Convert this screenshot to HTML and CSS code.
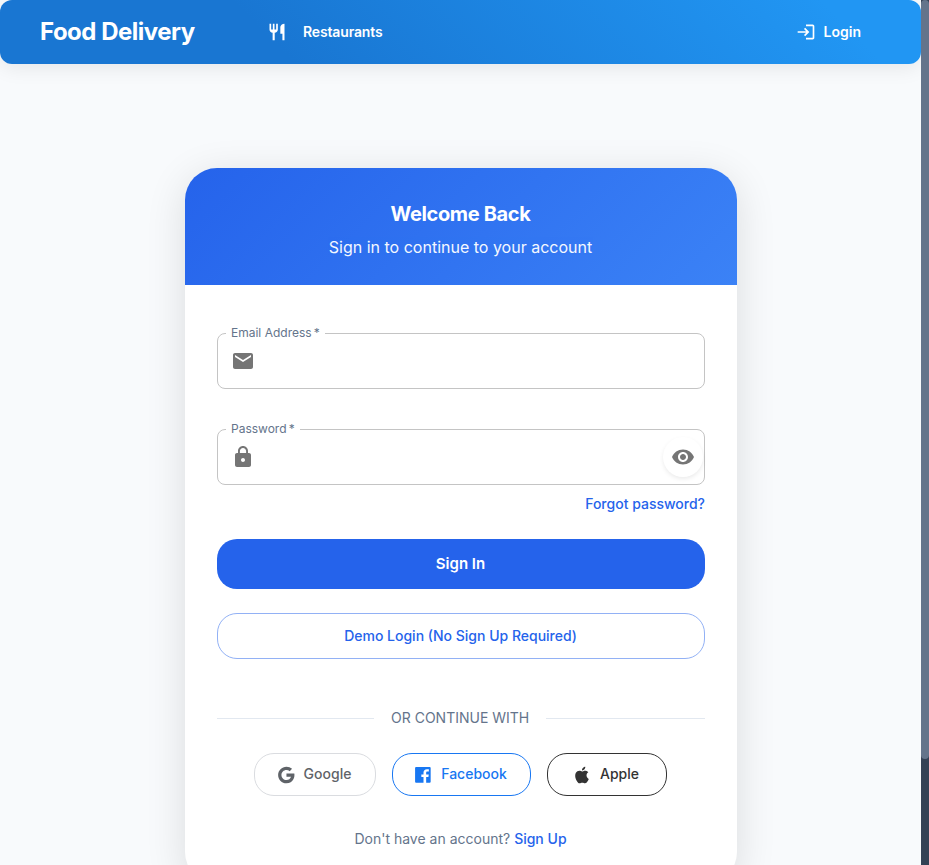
FILE: index.html
```html
<!DOCTYPE html>
<html lang="en">
<head>
<meta charset="utf-8">
<title>Food Delivery</title>
<link rel="stylesheet" href="styles.css">
</head>
<body>
<div class="page">
  <header class="navbar">
    <a class="brand">Food Delivery</a>
    <a class="nav-link">
      <svg class="icon-sm" viewBox="0 0 24 24"><path d="M11 9H9V2H7v7H5V2H3v7c0 2.120 1.660 3.840 3.750 3.970V22h2.500v-9.030C11.340 12.840 13 11.120 13 9V2h-2v7zm5-3v8h2.500v8H21V2c-2.760 0-5 2.240-5 4z"/></svg>
      <span>Restaurants</span>
    </a>
    <a class="login">
      <svg class="icon-sm" viewBox="0 0 24 24"><path d="M11 7 9.600 8.400l2.600 2.600H2v2h10.200l-2.600 2.600L11 17l5-5-5-5zm9 12h-8v2h8c1.100 0 2-.9 2-2V5c0-1.100-.9-2-2-2h-8v2h8v14z"/></svg>
      <span>Login</span>
    </a>
  </header>
  <main class="card">
    <div class="card-head">
      <h1>Welcome Back</h1>
      <p>Sign in to continue to your account</p>
    </div>
    <form class="card-body">
      <fieldset class="field">
        <legend>Email Address&#8201;*</legend>
        <svg class="icon" viewBox="0 0 24 24"><path d="M20 4H4c-1.100 0-1.990.9-1.990 2L2 18c0 1.100.9 2 2 2h16c1.100 0 2-.9 2-2V6c0-1.100-.9-2-2-2zm0 4-8 5-8-5V6l8 5 8-5v2z"/></svg>
      </fieldset>
      <fieldset class="field">
        <legend>Password&#8201;*</legend>
        <svg class="icon" viewBox="0 0 24 24"><path d="M18 8h-1V6c0-2.760-2.240-5-5-5S7 3.240 7 6v2H6c-1.100 0-2 .9-2 2v10c0 1.100.9 2 2 2h12c1.100 0 2-.9 2-2V10c0-1.100-.9-2-2-2zm-6 9c-1.100 0-2-.9-2-2s.9-2 2-2 2 .9 2 2-.9 2-2 2zm3.100-9H8.900V6c0-1.710 1.390-3.100 3.100-3.100 1.710 0 3.100 1.390 3.100 3.100v2z"/></svg>
        <span class="eye"><svg class="icon" viewBox="0 0 24 24"><path d="M12 4.500C7 4.500 2.730 7.610 1 12c1.730 4.390 6 7.500 11 7.500s9.270-3.110 11-7.500c-1.730-4.390-6-7.500-11-7.500zM12 17c-2.760 0-5-2.240-5-5s2.240-5 5-5 5 2.240 5 5-2.240 5-5 5zm0-8c-1.660 0-3 1.340-3 3s1.340 3 3 3 3-1.340 3-3-1.340-3-3-3z"/></svg></span>
      </fieldset>
      <a class="forgot">Forgot password?</a>
      <button type="button" class="btn primary">Sign In</button>
      <button type="button" class="btn demo">Demo Login (No Sign Up Required)</button>
      <div class="divider">OR CONTINUE WITH</div>
      <div class="social">
        <button type="button" class="btn google"><svg class="icon-sm" viewBox="0 0 24 24"><path d="M12.545 10.239v3.821h5.445c-.712 2.315-2.647 3.972-5.445 3.972-3.332 0-6.033-2.701-6.033-6.032s2.701-6.032 6.033-6.032c1.498 0 2.866.549 3.921 1.453l2.814-2.814C17.503 2.988 15.139 2 12.545 2 7.021 2 2.543 6.477 2.543 12s4.478 10 10.002 10c8.396 0 10.249-7.850 9.426-11.748z"/></svg><span>Google</span></button>
        <button type="button" class="btn facebook"><svg class="icon-sm" viewBox="0 0 24 24"><path d="M4 2.500h16a1.200 1.200 0 0 1 1.200 1.200v16.400a1.200 1.200 0 0 1-1.200 1.200h-4.200v-7h2.700l.4-3h-3.100V9.400c0-1 .4-1.500 1.600-1.500h1.600V5.200c-.5-.1-1.300-.2-2.300-.2-2.500 0-4.100 1.500-4.100 4v2.300H10v3h2.600v7H3.700a1.200 1.200 0 0 1-1.200-1.200V3.700A1.200 1.200 0 0 1 3.700 2.500z"/></svg><span>Facebook</span></button>
        <button type="button" class="btn apple"><svg class="icon-sm" viewBox="0 0 24 24"><path d="M18.710 19.500c-.83 1.240-1.710 2.450-3.050 2.470-1.340.03-1.770-.79-3.290-.79-1.530 0-2 .77-3.270.82-1.310.05-2.300-1.320-3.140-2.530C4.250 17 2.940 12.450 4.700 9.390c.87-1.520 2.430-2.480 4.120-2.510 1.280-.02 2.500.87 3.290.87.78 0 2.260-1.070 3.810-.91.65.03 2.470.26 3.640 1.980-.09.06-2.170 1.280-2.150 3.810.03 3.020 2.650 4.030 2.680 4.040-.03.07-.42 1.440-1.380 2.830M13 3.500c.73-.83 1.940-1.460 2.940-1.500.13 1.170-.34 2.350-1.040 3.190-.69.85-1.830 1.510-2.950 1.420-.15-1.150.41-2.350 1.050-3.110z"/></svg><span>Apple</span></button>
      </div>
      <p class="signup">Don't have an account? <a>Sign Up</a></p>
    </form>
  </main>
</div>
<div class="scrollbar"><div class="thumb"></div></div>
</body>
</html>
```
FILE: styles.css
```css
* { box-sizing: border-box; }
body {
  margin: 0;
  display: flex;
  height: 865px;
  overflow: hidden;
  font-family: Inter, sans-serif;
  background: #f8fafc;
}
svg { fill: currentColor; flex: none; }
.icon { width: 24px; height: 24px; display: block; }
.icon-sm { width: 20px; height: 20px; }
.page { width: 921px; height: 865px; overflow: hidden; }
.scrollbar { width: 8px; background: #334155; }
.thumb { height: 759px; background: #64748b; border-radius: 4px; }

.navbar {
  height: 64px;
  display: flex;
  align-items: center;
  padding: 0 60px 0 40px;
  color: #fff;
  border-radius: 12px;
  background: linear-gradient(45deg, #1976d2 30%, #2196f3 90%);
  box-shadow: 0 4px 20px rgba(0, 0, 0, .08);
}
.brand { width: 227px; padding-bottom: 2px; font-size: 24px; font-weight: 700; letter-spacing: -.5px; }
.nav-link { display: flex; align-items: center; gap: 16px; font-size: 14px; font-weight: 600; letter-spacing: -.15px; }
.login { margin-left: auto; display: flex; align-items: center; gap: 8px; font-size: 14px; font-weight: 600; }
.nav-link span, .login span { padding-bottom: 2px; }

.card {
  width: 552px;
  height: 716px;
  margin: 104px auto 0 185px;
  border-radius: 32px;
  background: #fff;
  overflow: hidden;
  box-shadow: 0 8px 40px rgba(0, 0, 0, .12);
}
.card-head {
  height: 117px;
  padding: 32px 1px 0 0;
  text-align: center;
  color: #fff;
  background: linear-gradient(135deg, #2563eb 0%, #3b82f6 100%);
}
h1 { margin: 0; font-size: 20px; line-height: 28px; font-weight: 700; letter-spacing: -.36px; }
.card-head p { margin: 7px 0 0; font-size: 16px; line-height: 24px; opacity: .95; }
.card-body { display: flex; flex-direction: column; padding: 42px 32px 0; }

.field {
  position: relative;
  width: 488px;
  height: 62px;
  margin: 0 0 34px;
  padding: 0 13px;
  border: 1px solid #c4c4c4;
  border-radius: 8px;
  color: #757575;
}
.field legend {
  height: 13px;
  padding: 0 5px;
  margin-left: -5px;
  font-size: 12px;
  line-height: 11px;
  letter-spacing: 0;
  color: #64748b;
}
.field > .icon { margin-top: 9px; }
.eye {
  position: absolute;
  right: 1px;
  top: 1px;
  width: 40px;
  height: 40px;
  padding: 8px;
  border-radius: 50%;
  background: #fff;
  box-shadow: 0 2px 4px rgba(0, 0, 0, .08);
}
.forgot { align-self: flex-end; margin-top: -26px; font-size: 14px; line-height: 22px; font-weight: 500; color: #2563eb; }
.btn {
  display: flex;
  align-items: center;
  justify-content: center;
  padding: 0 1px 2px 0;
  border: 1px solid;
  border-radius: 20px;
  background: #fff;
  font: 500 14px Inter, sans-serif;
}
.primary { height: 50px; margin-top: 24px; border: 0; background: #2563eb; color: #fff; font-size: 15px; font-weight: 600; }
.demo { height: 46px; margin-top: 24px; border-color: #92b1f5; color: #2563eb; }
.divider { display: flex; align-items: center; gap: 17px; margin-top: 48px; padding-right: 0; font-size: 14px; line-height: 22px; color: #64748b; }
.divider::before, .divider::after { content: ""; flex: 1; height: 1px; background: #e2e8f0; }
.divider::before { flex: 0 0 157px; }
.social { display: flex; justify-content: center; gap: 16px; margin-top: 24px; padding-right: 1px; }
.social .btn { height: 43px; gap: 8px; padding: 0 3px 0 0; }
.social span { padding-bottom: 2px; }
.google { width: 122px; color: #5f6368; border-color: #dadce0; }
.facebook { width: 139px; color: #1877f2; }
.apple { width: 120px; color: #333; }
.signup { margin: 32px 1px 0 0; text-align: center; font-size: 14px; line-height: 22px; color: #64748b; }
.signup a { color: #2563eb; font-weight: 500; }
```
